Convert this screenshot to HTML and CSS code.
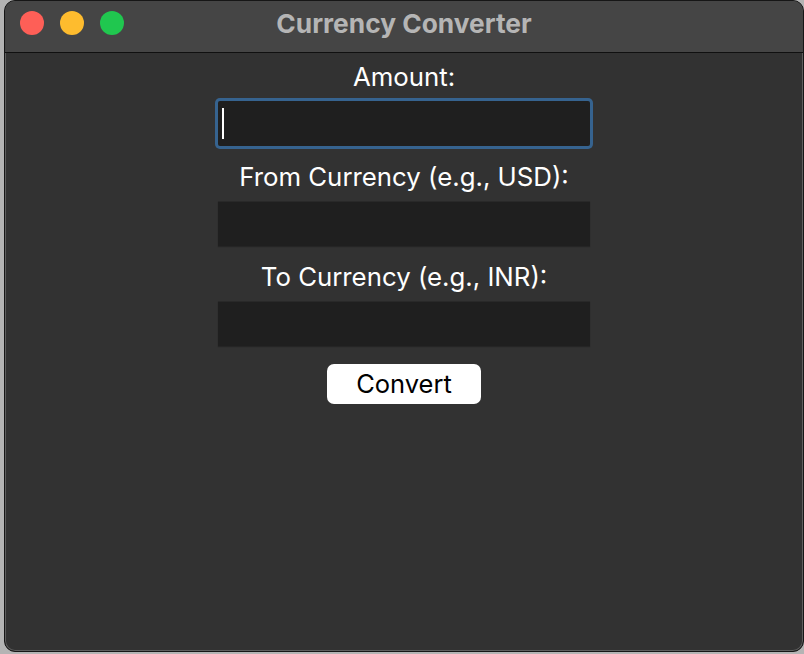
FILE: index.html
```html
<!DOCTYPE html>
<html>
<head>
<meta charset="utf-8">
<title>Currency Converter</title>
<link rel="stylesheet" href="styles.css">
</head>
<body>
<div class="window">
  <div class="titlebar">
    <div class="lights">
      <span class="light red"></span>
      <span class="light yellow"></span>
      <span class="light green"></span>
    </div>
    <div class="title">Currency Converter</div>
  </div>
  <div class="content">
    <div class="field first">
      <div class="label">Amount:</div>
      <div class="entry focused"><span class="caret"></span></div>
    </div>
    <div class="field">
      <div class="label">From Currency (e.g., USD):</div>
      <div class="entry"></div>
    </div>
    <div class="field">
      <div class="label">To Currency (e.g., INR):</div>
      <div class="entry"></div>
    </div>
    <div class="button">Convert</div>
  </div>
</div>
</body>
</html>
```
FILE: styles.css
```css
html, body {
  margin: 0;
  padding: 0;
}
body {
  width: 804px;
  height: 654px;
  background: #b4b4b4;
  overflow: hidden;
  font-family: "Inter", "Liberation Sans", sans-serif;
}
.window {
  margin-left: 4px;
  width: 800px;
  height: 652px;
  box-sizing: border-box;
  border: 1px solid #161616;
  border-radius: 11px;
  background: #323232;
  box-shadow: inset 0 0 0 1px #5e5e5e;
  overflow: hidden;
  display: flex;
  flex-direction: column;
}
.titlebar {
  height: 52px;
  flex: none;
  box-sizing: border-box;
  background: #454545;
  border-bottom: 1px solid #101010;
  position: relative;
  display: flex;
  align-items: center;
  justify-content: center;
}
.lights {
  position: absolute;
  left: 15px;
  top: 10px;
  display: flex;
  gap: 16px;
}
.light {
  width: 24px;
  height: 24px;
  border-radius: 50%;
  display: block;
}
.red { background: #fe5f57; }
.yellow { background: #febc2e; }
.green { background: #20c74f; }
.title {
  color: #b5b5b5;
  font-weight: 700;
  font-size: 26.3px;
  margin-top: -7px;
}
.content {
  display: flex;
  flex-direction: column;
  align-items: center;
}
.field {
  display: flex;
  flex-direction: column;
  align-items: center;
  margin-top: 15px;
}
.field.first {
  margin-top: 8px;
}
.label {
  color: #ffffff;
  font-size: 25.8px;
  line-height: 30px;
  height: 30px;
  margin-top: 1px;
  margin-bottom: -1px;
}
.entry {
  margin-top: 10px;
  width: 372px;
  height: 45px;
  background: #1f1f1f;
  box-shadow: 0 1px 1px rgba(0,0,0,0.25), inset 0 1px 0 #292929;
  position: relative;
}
.entry.focused {
  box-shadow: 0 0 0 3px #36638f;
  border-radius: 2px;
}
.caret {
  position: absolute;
  left: 4px;
  top: 7px;
  width: 2px;
  height: 31px;
  background: #ffffff;
}
.button {
  margin-top: 18px;
  width: 154px;
  height: 40px;
  border-radius: 7px;
  background: #ffffff;
  color: #000000;
  font-size: 25.5px;
  line-height: 40px;
  text-align: center;
}
```
